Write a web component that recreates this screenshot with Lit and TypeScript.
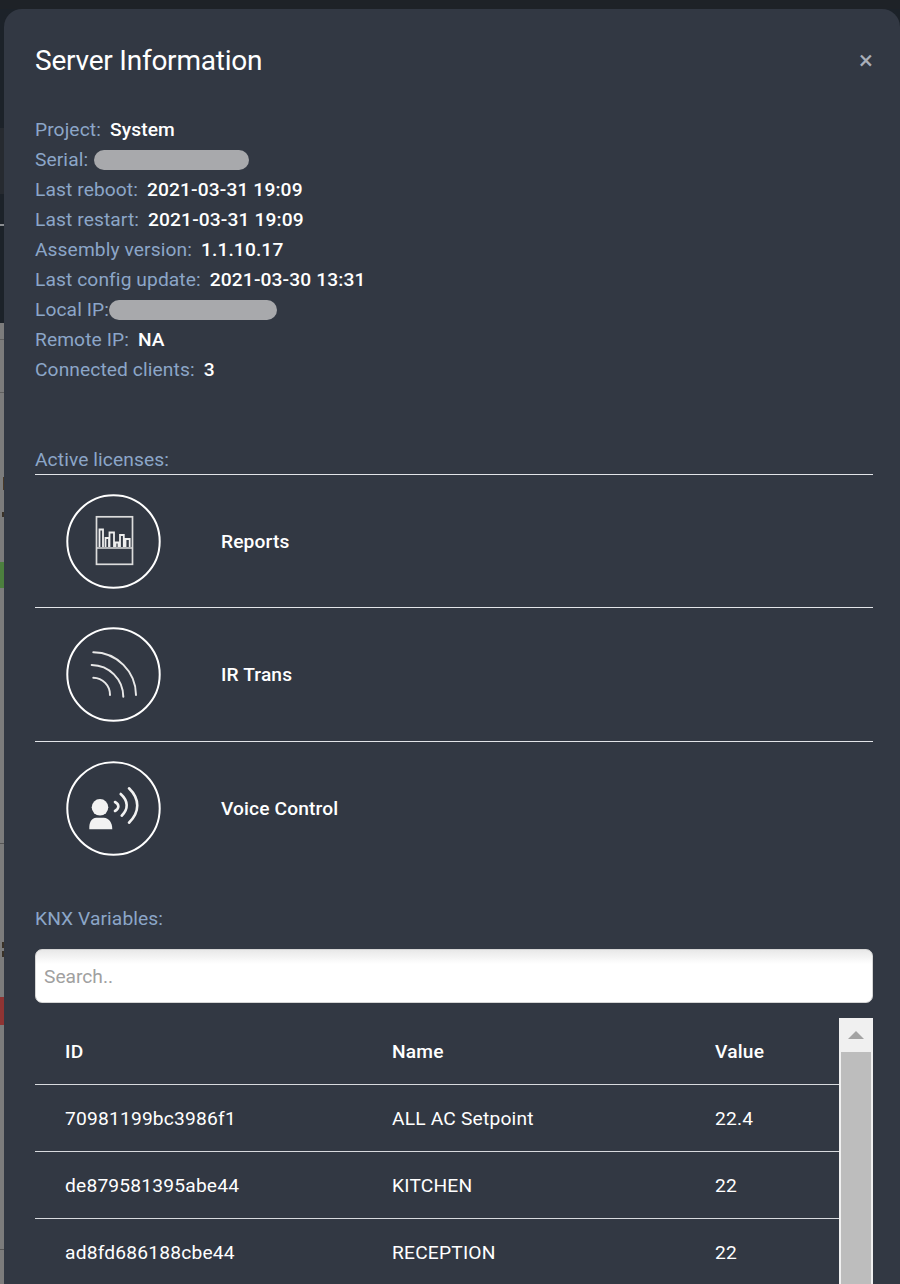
import { LitElement, html, css, svg } from "lit";
import { customElement } from "lit/decorators.js";

const info: [string, string | null, number?][] = [
  ["Project:", "System"],
  ["Serial:", null, 155],
  ["Last reboot:", "2021-03-31 19:09"],
  ["Last restart:", "2021-03-31 19:09"],
  ["Assembly version:", "1.1.10.17"],
  ["Last config update:", "2021-03-30 13:31"],
  ["Local IP:", null, 168],
  ["Remote IP:", "NA"],
  ["Connected clients:", "3"],
];

const rows = [
  ["70981199bc3986f1", "ALL AC Setpoint", "22.4"],
  ["de879581395abe44", "KITCHEN", "22"],
  ["ad8fd686188cbe44", "RECEPTION", "22"],
];

const smears: [number, number, number, string][] = [
  [128, 66, 0, "#262a30"],
  [224, 2, 0, "#8a8d91"],
  [339, 1, 0, "#5f5f5f"],
  [392, 1, 0, "#5f5f5f"],
  [477, 13, 3, "#4a3a28"],
  [512, 5, 2, "#3a3228"],
  [562, 26, 0, "#4c7f3e"],
  [843, 1, 0, "#555555"],
  [942, 6, 2, "#3a3228"],
  [951, 6, 2, "#3a3228"],
  [997, 28, 0, "#8f3433"],
  [1249, 1, 0, "#555555"],
];

const reportIcon = svg`<rect x="30.500" y="22.800" width="36" height="47.500" fill="none" stroke="#dcdcdc" stroke-width="1.700"/>
<path d="M30 54h37" stroke="#dcdcdc" stroke-width="1.700"/>
<path d="M33.500 53V35.500h3.500V53M39.500 53V44h3.500v9M43.500 53V38.500h4.500V53M49.500 53v-4.500h3V53M54 53V41h3.800v12M59.500 53v-8h4.200v8" fill="none" stroke="#eeeeee" stroke-width="1.800"/>`;
const irIcon = svg`<g fill="none" stroke="#e8e8e8" stroke-width="2" stroke-linecap="round">
<path d="M27.300 25.300A43 43 0 0 1 70 68"/>
<path d="M25.700 38A32 32 0 0 1 57.300 69.700"/>
<path d="M27.300 50.700A17 17 0 0 1 44 68"/></g>`;
const voiceIcon = svg`<circle cx="34" cy="46.300" r="8.300" fill="#f2f2f2"/>
<path d="M23.300 68.300c-.3-7 2-11 7-11.500h7.500c5 .5 8.500 4.500 8.500 11.500z" fill="#f2f2f2"/>
<g fill="none" stroke="#f2f2f2" stroke-linecap="round" stroke-width="2.600">
<path d="M49 41C53.500 43.500 53.500 47.500 49 50"/>
<path d="M54.700 33C62.500 40 62.500 48 55.700 54.700"/>
<path d="M63 27.300C74 38 74 51 63 61.700"/></g>`;

@customElement("app-root")
export class AppRoot extends LitElement {
  static styles = css`
    :host {
      display: block;
      width: 900px;
      height: 1284px;
      overflow: hidden;
      background: linear-gradient(#1c2229 0 323px, #7c7c7c 323px);
      font-family: Roboto, "Liberation Sans", sans-serif;
      position: relative;
    }
    .topband {
      height: 9px;
      background: #1e2227;
    }
    .modal {
      margin-left: 4px;
      height: 1275px;
      box-sizing: border-box;
      background: #323843;
      border-radius: 18px 18px 0 0;
      padding: 32px 27px 0 31px;
      color: #fff;
    }
    .head {
      display: flex;
      justify-content: space-between;
      align-items: center;
      height: 40px;
      margin-bottom: 34px;
    }
    h1 {
      margin: 0;
      font-size: 28px;
      font-weight: 400;
      line-height: 40px;
      letter-spacing: -0.23px;
    }
    .close {
      font-size: 26px;
      color: #a9afb9;
      line-height: 26px;
      margin: -2px 0 0 0;
      font-weight: 400;
    }
    .info {
      height: 270px;
    }
    .line {
      height: 30px;
      line-height: 30px;
      font-size: 19.2px;
      display: flex;
      align-items: center;
      white-space: nowrap;
    }
    .k {
      color: #8ca6c8;
      margin-right: 9px;
      letter-spacing: 0.1px;
    }
    .line.tight .k {
      margin-right: 0;
    }
    .v {
      font-weight: 500;
      color: #fff;
      letter-spacing: 0.12px;
    }
    .mask {
      height: 20px;
      border-radius: 10px;
      background: #a8a9ac;
    }
    .line:not(.tight) .mask {
      margin-left: -3px;
    }
    .label {
      color: #8ca6c8;
      font-size: 19.2px;
      line-height: 30px;
      height: 29px;
      letter-spacing: 0.1px;
    }
    .licenses {
      margin-top: 59.9px;
    }
    .lic {
      display: flex;
      align-items: center;
      border-top: 1px solid #e2e4e8;
      height: 132.5px;
      font-size: 19.2px;
      font-weight: 500;
      letter-spacing: 0.12px;
    }
    .ring {
      width: 95px;
      height: 95px;
      margin-left: 31px;
      margin-right: 60px;
      display: block;
      flex: none;
    }
    .knx {
      margin-top: 30px;
      height: 30px;
    }
    .search {
      display: block;
      box-sizing: border-box;
      width: 838px;
      height: 54px;
      margin-top: 15px;
      border: 1px solid #d5d5d5;
      border-radius: 7px;
      background: linear-gradient(#e8e8e8 0, #ffffff 14px);
      padding: 0 8px;
      font: 400 19.2px Roboto, "Liberation Sans", sans-serif;
      outline: none;
    }
    .search::placeholder {
      color: #a0a0a0;
      opacity: 1;
    }
    .tablewrap {
      display: flex;
      margin-top: 15px;
      width: 838px;
      height: 300px;
      align-items: stretch;
    }
    .table {
      flex: 1;
      min-width: 0;
    }
    .row {
      display: grid;
      grid-template-columns: 327px 323px 1fr;
      padding-left: 30px;
      height: 66px;
      align-items: center;
      font-size: 19.2px;
      border-bottom: 1px solid #d8dade;
      letter-spacing: 0.2px;
    }
    .row.hd {
      font-weight: 500;
    }
    .sb {
      width: 34px;
      flex: none;
      background: #f0f0f0;
      display: flex;
      flex-direction: column;
      align-items: center;
    }
    .arrow {
      height: 34px;
      display: flex;
      align-items: center;
      justify-content: center;
    }
    .thumb {
      width: 30px;
      flex: 1;
      background: #bdbdbd;
    }
    .smear {
      position: absolute;
    }
  `;

  render() {
    return html`
      <div class="topband"></div>
      ${smears.map(
        ([top, h, left, c]) =>
          html`<div
            class="smear"
            style="top:${top}px;height:${h}px;left:${left}px;width:${4 - left}px;background:${c}"
          ></div>`
      )}
      <div class="modal">
        <div class="head">
          <h1>Server Information</h1>
          <span class="close">×</span>
        </div>
        <div class="info">
          ${info.map(
            ([k, v, w]) => html`<div class="line ${k === "Local IP:" ? "tight" : ""}">
              <span class="k">${k}</span>
              ${v === null
                ? html`<span class="mask" style="width:${w}px"></span>`
                : html`<span class="v">${v}</span>`}
            </div>`
          )}
        </div>
        <div class="licenses">
          <div class="label">Active licenses:</div>
          ${[
            ["Reports", reportIcon],
            ["IR Trans", irIcon],
            ["Voice Control", voiceIcon],
          ].map(
            ([name, icon]) => html`<div class="lic">
              <svg class="ring" viewBox="0 0 95 95">
                <circle cx="47.500" cy="47.500" r="46.200" fill="none" stroke="#fff" stroke-width="2"></circle>
                ${icon}
              </svg>
              <span>${name}</span>
            </div>`
          )}
        </div>
        <div class="knx label">KNX Variables:</div>
        <input class="search" placeholder="Search.." />
        <div class="tablewrap">
          <div class="table">
            <div class="row hd"><span>ID</span><span>Name</span><span>Value</span></div>
            ${rows.map(
              (r) => html`<div class="row"><span>${r[0]}</span><span>${r[1]}</span><span>${r[2]}</span></div>`
            )}
          </div>
          <div class="sb">
            <div class="arrow">
              <svg width="16" height="8" viewBox="0 0 16 8"><path d="M8 0l8 8H0z" fill="#a3a3a3"></path></svg>
            </div>
            <div class="thumb"></div>
          </div>
        </div>
      </div>
    `;
  }
}
